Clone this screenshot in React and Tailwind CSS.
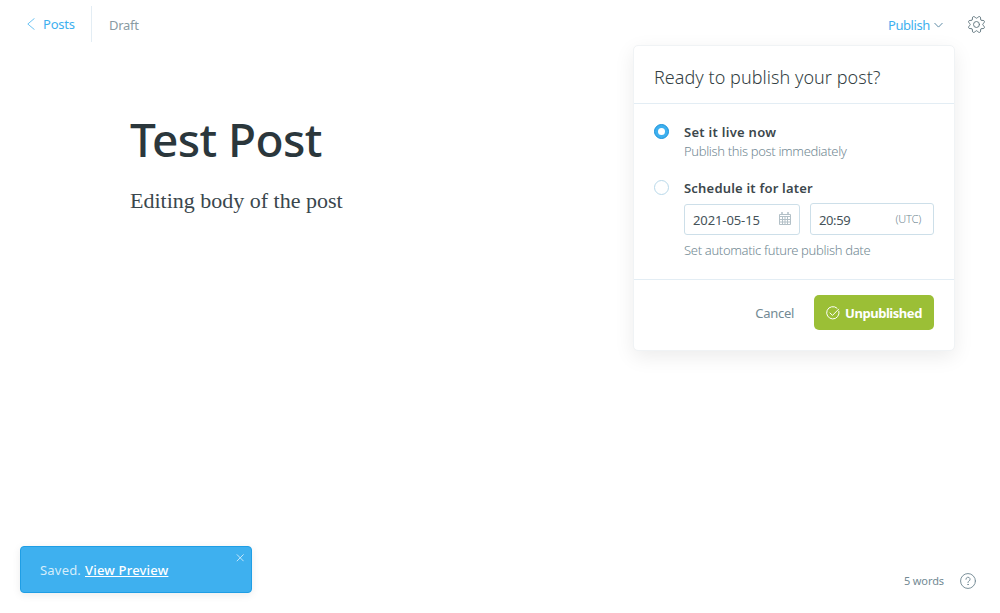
import React from "react";

const sans = "font-['Noto_Sans','Open_Sans',sans-serif]";

function ChevronLeft() {
  return (
    <svg className="h-3 w-2 shrink-0" viewBox="0 0 8 12" fill="none" stroke="#6cc3f3" strokeWidth="1" strokeLinecap="round" strokeLinejoin="round">
      <path d="M7.2 .6 .8 6l6.4 5.4" />
    </svg>
  );
}

function ChevronDown() {
  return (
    <svg className="h-1.5 w-[9px] shrink-0" viewBox="0 0 9 6" fill="none" stroke="#5f8ca6" strokeWidth="1" strokeLinecap="round" strokeLinejoin="round">
      <path d="M.8 1.3 4.5 5.1 8.2 1.3" />
    </svg>
  );
}

function Gear() {
  return (
    <svg className="h-[17px] w-[17px]" viewBox="0 0 24 24" fill="none" stroke="#667a83" strokeWidth="1.4" strokeLinecap="round" strokeLinejoin="round">
      <path d="M10.546 2.438a1.957 1.957 0 0 0 2.908 0L14.4 1.4a1.959 1.959 0 0 1 3.41 1.413l-.071 1.4a1.958 1.958 0 0 0 2.051 2.054l1.4-.071a1.959 1.959 0 0 1 1.41 3.41l-1.042.94a1.96 1.96 0 0 0 0 2.909l1.042.94a1.959 1.959 0 0 1-1.413 3.41l-1.4-.071a1.958 1.958 0 0 0-2.056 2.056l.071 1.4A1.959 1.959 0 0 1 14.4 22.6l-.941-1.041a1.959 1.959 0 0 0-2.908 0L9.606 22.6A1.959 1.959 0 0 1 6.2 21.192l.072-1.4a1.958 1.958 0 0 0-2.056-2.056l-1.4.071A1.958 1.958 0 0 1 1.4 14.4l1.041-.94a1.961 1.961 0 0 0 0-2.909L1.4 9.606A1.958 1.958 0 0 1 2.809 6.2l1.4.071a1.958 1.958 0 0 0 2.058-2.06L6.2 2.81A1.959 1.959 0 0 1 9.606 1.4z" />
      <circle cx="12" cy="12" r="4.2" />
    </svg>
  );
}

function Calendar() {
  return (
    <svg className="mb-0.5 h-[13px] w-3 shrink-0" viewBox="0 0 12 13" fill="none" stroke="#b3c0c7" strokeWidth="1">
      <path d="M.5 2.5h11v10H.5zM.5 4.5h11M.5 7.5h11M.5 10h11M3.5 4.5v8M6 4.5v8M8.5 4.5v8" />
      <path d="M3 0v3M9 0v3" strokeWidth="1.5" />
    </svg>
  );
}

function CheckCircle() {
  return (
    <svg className="h-[14px] w-[14px] shrink-0" viewBox="0 0 14 14" fill="none" stroke="#fff" strokeWidth="1" strokeLinecap="round" strokeLinejoin="round">
      <path d="M12.9 5.2A6.2 6.2 0 1 1 11 2.1" />
      <path d="M4 7 6.5 9.4 12.6 3.2" />
    </svg>
  );
}

function Help() {
  return (
    <svg className="mt-px h-4 w-4 shrink-0" viewBox="0 0 17 17" fill="none" stroke="#738a94" strokeWidth="1" strokeLinecap="round">
      <circle cx="8.5" cy="8.5" r="7.9" />
      <path d="M6.3 6.7a2.2 2.2 0 1 1 3.3 1.9c-.8.4-1.1.8-1.1 1.6" />
      <circle cx="8.5" cy="12.2" r=".3" />
    </svg>
  );
}

function Header() {
  return (
    <header className="flex h-12 items-start text-[13px] leading-5">
      <a className="mt-[14px] ml-[27px] flex items-center gap-2 text-[#3eb0ef]">
        <ChevronLeft />
        <span className="w-8 tracking-[-0.2px]">Posts</span>
      </a>
      <div className="mt-1.5 ml-4 h-9 w-px bg-[#e3edf4]" />
      <span className="mt-[15px] ml-[17px] tracking-[-0.3px] text-[#8a9ba3]">Draft</span>
      <button className="mt-[15px] ml-auto flex items-center gap-1 text-[#3eb0ef]">
        <span className="tracking-[-0.4px]">Publish</span>
        <ChevronDown />
      </button>
      <button className="mt-[15.5px] mr-[15px] ml-[25px]"><Gear /></button>
    </header>
  );
}

function PublishMenu() {
  return (
    <section className="absolute top-[45px] left-[633px] w-[322px] rounded-[5px] border border-[#f0f3f5] bg-white shadow-[0_6px_20px_rgba(0,0,0,0.08)]">
      <h2 className="h-[58px] border-b border-[#e3edf4] pt-[17px] pl-5 text-[18px] leading-7 font-light tracking-[0.04px] text-[#343f44]">
        Ready to publish your post?
      </h2>
      <div className="flex h-[176px] flex-col border-b border-[#e3edf4] px-5 pt-[18px]">
        <div className="flex gap-[15px]">
          <span className="mt-0.5 flex h-[15px] w-[15px] items-center justify-center rounded-full border border-[#1a93da] bg-[#3eb0ef]">
            <span className="h-[7px] w-[7px] rounded-full bg-white" />
          </span>
          <div className="flex flex-col whitespace-nowrap">
            <span className="text-[13px] leading-5 font-semibold tracking-[0.28px] text-[#3c474c]">Set it live now</span>
            <span className="text-[13px] leading-[18px] font-light tracking-[-0.34px] text-[#738a94]">Publish this post immediately</span>
          </div>
        </div>
        <div className="mt-[18px] flex gap-[15px]">
          <span className="mt-0.5 h-[15px] w-[15px] rounded-full border border-[#b9d9ea] bg-white" />
          <div className="flex flex-col whitespace-nowrap">
            <span className="text-[13px] leading-5 font-semibold tracking-[0.2px] text-[#3c474c]">Schedule it for later</span>
            <div className="mt-[5px] flex items-end gap-[10px]">
              <div className="flex h-[31px] w-[116px] items-center justify-between rounded-[3px] border border-[#cddfe9] pr-2 pl-2 text-[13px] text-[#465359]">
                <span className="pt-[3px] tracking-[-0.1px]">2021-05-15</span>
                <Calendar />
              </div>
              <div className="flex h-8 w-[124px] items-center justify-between rounded-[3px] border border-[#cddfe9] pr-3 pl-2 text-[13px] text-[#465359]">
                <span className="pt-1 tracking-[-0.4px]">20:59</span>
                <span className="text-[11px] font-light tracking-[-0.2px] text-[#738a94]">(UTC)</span>
              </div>
            </div>
            <span className="mt-[5px] text-[13px] leading-5 font-light tracking-[-0.32px] text-[#738a94]">Set automatic future publish date</span>
          </div>
        </div>
      </div>
      <div className="flex h-[70px] items-start justify-end gap-5 px-5 pt-[15px]">
        <button className="h-[35px] pt-0.5 text-[13px] tracking-[-0.3px] text-[#738a94]">Cancel</button>
        <button className="flex h-[35px] w-[120px] items-center gap-[5px] rounded-[5px] bg-[#9bbf36] pl-3 text-[13px] font-bold text-white">
          <CheckCircle />
          <span className="pt-0.5 tracking-[-0.45px]">Unpublished</span>
        </button>
      </div>
    </section>
  );
}

function Toast() {
  return (
    <div className="absolute top-[546px] left-5 flex h-[47px] w-[232px] items-start justify-between rounded-[4px] border border-[#1f9ee5] bg-[#3eb0ef] pr-[7px] pl-[19px] shadow-[0_2px_8px_rgba(0,0,0,0.08)]">
      <p className="mt-[13px] flex gap-[5px] text-[13px] leading-5 whitespace-nowrap text-[#d5edfb]">
        <span className="w-10 tracking-[0.2px]">Saved.</span>
        <a className="font-medium tracking-[0.2px] text-white underline">View Preview</a>
      </p>
      <svg className="mt-[7px] h-2 w-2" viewBox="0 0 8 8" fill="none" stroke="#c5e7fa" strokeWidth="1">
        <path d="m.8.4 6.8 6.8M7.6.4.8 7.2" />
      </svg>
    </div>
  );
}

export default function App() {
  return (
    <div className={"relative flex h-[613px] w-[1000px] flex-col overflow-hidden bg-white " + sans}>
      <Header />
      <main className="flex flex-1 flex-col items-start pt-[61px] pl-[130px]">
        <h1 className="text-[46px] leading-[60px] font-medium tracking-[-0.6px] text-[#2b373c]">Test Post</h1>
        <p className="mt-[18px] font-['Liberation_Serif','DejaVu_Serif',serif] text-[22px] leading-7 text-[#3a474d]">Editing body of the post</p>
      </main>
      <footer className="flex h-[41px] items-start justify-end gap-4 pr-6 text-[#738a94]">
        <span className="text-[11px] leading-[18px] tracking-[-0.1px]">5 words</span>
        <Help />
      </footer>
      <PublishMenu />
      <Toast />
    </div>
  );
}
